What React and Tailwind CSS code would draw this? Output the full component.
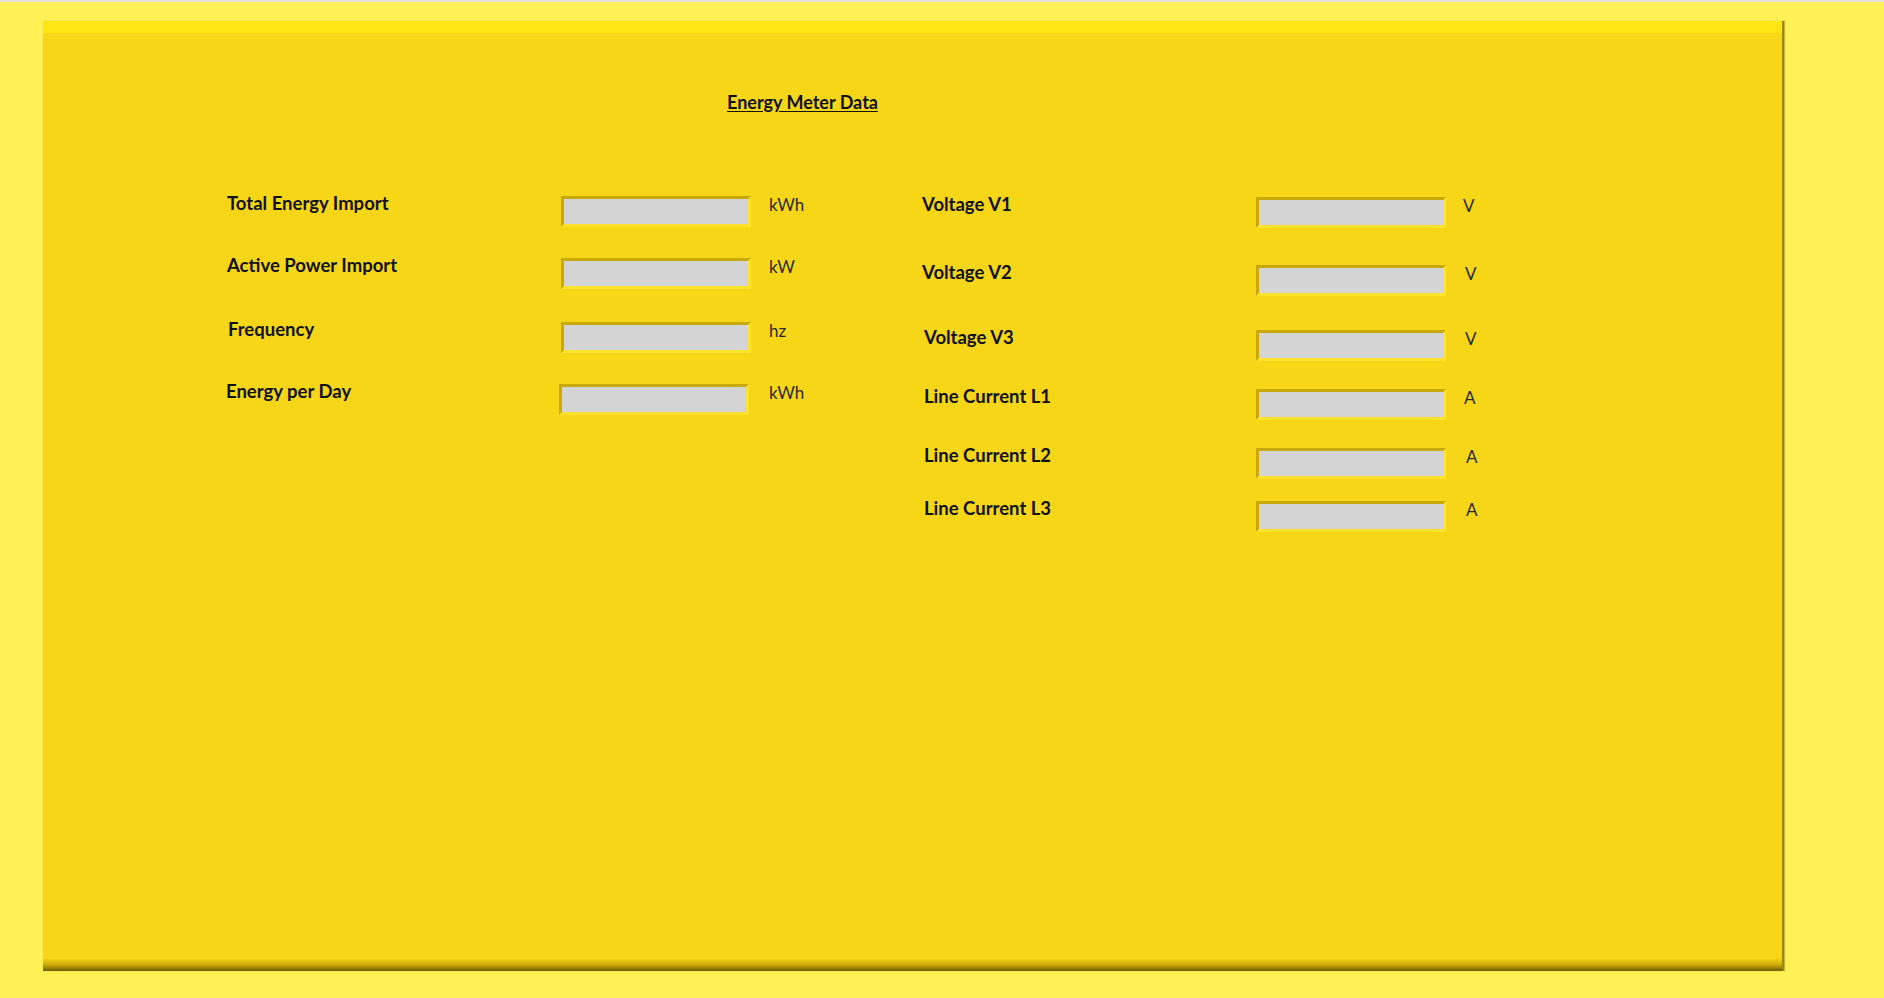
import React from "react";

const font = { fontFamily: "Lato, 'Open Sans', sans-serif" };

function Field({ label, unit, labelPl = "pl-0", inputMl = "ml-0", unitMl = "ml-[18px]", mt = "mt-0" }) {
  return (
    <div className={`flex items-start h-[34px] ${mt}`}>
      <div className={`w-[334px] shrink-0 ${labelPl}`}>
        <span className="block text-[18.5px] leading-[20px] font-bold text-[#111]">{label}</span>
      </div>
      <div className={`mt-[3px] w-[190px] h-[31px] shrink-0 bg-[#d4d4d4] border-[3px] border-t-[#c9a80a] border-l-[#c9a80a] border-b-[#ffe32b] border-r-[#ffe32b] ${inputMl}`} />
      <span className={`mt-[2px] text-[17px] leading-[20px] text-[#2a2a2a] ${unitMl}`}>{unit}</span>
    </div>
  );
}

export default function App() {
  return (
    <div style={font} className="w-[1884px] min-h-[998px] bg-[#fff056] border-t-2 border-[#e3e3dc] pt-[19px] pl-[43px]">
      <div className="w-[1741px] h-[950px] bg-[#f6d617] flex flex-col border-r-2 border-[#9e8700] shadow-[1px_0_1px_rgba(120,100,0,0.4)]">
        <div className="h-[12px] bg-[#ffe512]" />
        <div className="flex-1 flex flex-col">
          <div className="pt-[57px] pl-[684px]">
            <span className="text-[18px] leading-[24px] font-bold underline underline-offset-[2px] text-[#111]">Energy Meter Data</span>
          </div>
          <div className="mt-[78px] pl-[184px] flex items-start">
            <div className="w-[695px] flex flex-col">
              <Field label="Total Energy Import" unit="kWh" />
              <Field label="Active Power Import" unit="kW" mt="mt-[28px]" />
              <Field label="Frequency" unit="hz" mt="mt-[30px]" labelPl="pl-[1px]" />
              <Field label="Energy per Day" unit="kWh" mt="mt-[28px]" labelPl="-ml-[1px]" inputMl="-ml-[1px]" unitMl="ml-[20px]" />
            </div>
            <div className="flex flex-col mt-[1px]">
              <Field label="Voltage V1" unit="V" unitMl="ml-[17px]" />
              <Field label="Voltage V2" unit="V" mt="mt-[34px]" unitMl="ml-[19px]" />
              <Field label="Voltage V3" unit="V" mt="mt-[31px]" labelPl="pl-[2px]" unitMl="ml-[19px]" />
              <Field label="Line Current L1" unit="A" mt="mt-[25px]" labelPl="pl-[2px]" unitMl="ml-[18px]" />
              <Field label="Line Current L2" unit="A" mt="mt-[25px]" labelPl="pl-[2px]" unitMl="ml-[20px]" />
              <Field label="Line Current L3" unit="A" mt="mt-[19px]" labelPl="pl-[2px]" unitMl="ml-[20px]" />
            </div>
          </div>
        </div>
        <div className="h-[12px] bg-gradient-to-b from-[#f0d012] via-[#c9a90a] to-[#6f5d00]" />
      </div>
    </div>
  );
}
